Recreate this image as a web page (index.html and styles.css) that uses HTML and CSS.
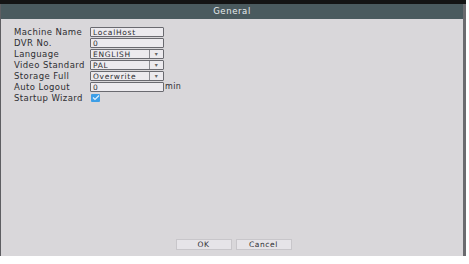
FILE: index.html
```html
<!doctype html>
<html>
<head>
	<meta charset="utf-8">
	<title>General</title>
	<link rel="stylesheet" href="styles.css">
</head>
<body>
	<div class="screen">
		<div class="topbar"></div>
		<div class="dialog">
			<div class="title">General</div>
			<div class="content">
				<div class="form">
					<div class="label">Machine Name</div>
					<div class="field"><div class="box">LocalHost</div></div>

					<div class="label">DVR No.</div>
					<div class="field"><div class="box">0</div></div>

					<div class="label">Language</div>
					<div class="field"><div class="box select"><span class="val">ENGLISH</span><span class="arrow">&#9662;</span></div></div>

					<div class="label">Video Standard</div>
					<div class="field"><div class="box select"><span class="val">PAL</span><span class="arrow">&#9662;</span></div></div>

					<div class="label">Storage Full</div>
					<div class="field"><div class="box select"><span class="val">Overwrite</span><span class="arrow">&#9662;</span></div></div>

					<div class="label">Auto Logout</div>
					<div class="field"><div class="box">0</div><span class="unit">min</span></div>

					<div class="label">Startup Wizard</div>
					<div class="field">
						<div class="check">
							<svg width="8" height="7" viewBox="0 0 8 7"><path d="M1 3.5 L3 5.5 L7 1.5" fill="none" stroke="#dff0ff" stroke-width="1.2"/></svg>
						</div>
					</div>
				</div>
				<div class="buttons">
					<div class="btn">OK</div>
					<div class="btn">Cancel</div>
				</div>
			</div>
		</div>
	</div>
</body>
</html>
```

FILE: styles.css
```css
body {
	margin: 0;
	background: #fff;
	font-family: "DejaVu Sans", "Liberation Sans", sans-serif;
}
.screen {
	width: 469px;
	height: 264px;
	background: #fff;
}
.topbar {
	width: 466px;
	height: 4px;
	background: #141414;
}
.dialog {
	width: 462px;
	height: 252px;
	border-left: 1px solid #5e5e62;
	border-right: 3px solid #6a6a6e;
	display: flex;
	flex-direction: column;
}
.title {
	height: 15px;
	background: #4a5a5e;
	color: #e8ecee;
	font-size: 8.5px;
	letter-spacing: 0.6px;
	text-align: center;
	line-height: 15px;
}
.content {
	flex: 1;
	background: #d9d7da;
	display: flex;
	flex-direction: column;
	justify-content: space-between;
	padding: 7px 0 6px 13px;
}
.form {
	display: grid;
	grid-template-columns: 76px auto;
	grid-auto-rows: 11px;
	align-items: center;
	color: #2e2e32;
	font-size: 8.5px;
	letter-spacing: 0.4px;
}
.field {
	display: flex;
	align-items: center;
}
.box {
	width: 70px;
	height: 8px;
	border: 1px solid #6a6a70;
	border-radius: 1px;
	background: #eceaee;
	font-size: 7.5px;
	letter-spacing: 0.7px;
	line-height: 9px;
	padding-left: 2px;
	box-sizing: content-box;
	display: flex;
	overflow: hidden;
	color: #2e2e32;
}
.select {
	padding-left: 0;
	width: 72px;
}
.select .val {
	flex: 1;
	padding-left: 2px;
	border-right: 1px solid #8a8a90;
}
.select .arrow {
	width: 13px;
	font-size: 6px;
	line-height: 8px;
	color: #666;
	text-align: center;
}
.unit {
	margin-left: 1px;
	font-size: 8px;
	color: #2e2e32;
}
.check {
	width: 9px;
	height: 8px;
	margin-left: 1px;
	background: #3d9ee6;
	border-radius: 1px;
	display: flex;
	align-items: center;
	justify-content: center;
}
.buttons {
	display: flex;
	justify-content: center;
	gap: 4px;
	padding-right: 10px;
}
.btn {
	width: 54px;
	height: 9px;
	border: 1px solid #c8c6ca;
	background: #e6e4e8;
	color: #2e2e32;
	font-size: 7.5px;
	letter-spacing: 0.6px;
	line-height: 9px;
	text-align: center;
}
```
